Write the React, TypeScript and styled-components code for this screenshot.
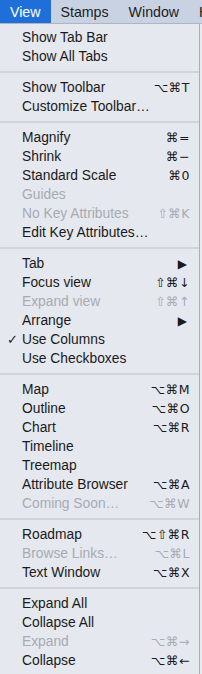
import React from 'react';
import styled, { createGlobalStyle } from 'styled-components';

const GlobalStyle = createGlobalStyle`
  body {
    margin: 0;
    background: #e9ebee;
    font-family: "Liberation Sans", Arial, sans-serif;
  }
`;

const Page = styled.div`
  width: 202px;
  height: 674px;
  overflow: hidden;
`;

const MenuBar = styled.div`
  display: flex;
  height: 23px;
  background: #c9d2e2;
  border-bottom: 1px solid #aeb6c4;
  font-size: 14.2px;
  white-space: nowrap;
`;

const BarItem = styled.div<{ $active?: boolean }>`
  display: flex;
  align-items: center;
  padding: 0 10px;
  color: ${({ $active }) => ($active ? '#ffffff' : '#1c1c1c')};
  background: ${({ $active }) => ($active ? '#1f6fd8' : 'transparent')};
`;

const Menu = styled.div`
  width: 199px;
  padding: 4px 0 4px;
  background: #e5e8ef;
  border-right: 1px solid #a9adb5;
`;

const Row = styled.div<{ $disabled?: boolean }>`
  display: flex;
  align-items: center;
  height: 19px;
  font-size: 13.8px;
  color: ${({ $disabled }) => ($disabled ? '#a7abb2' : '#1a1a1a')};
  white-space: nowrap;
`;

const Check = styled.span`
  width: 22px;
  padding-left: 7px;
  box-sizing: border-box;
  font-family: "DejaVu Sans", sans-serif;
  font-size: 13px;
`;

const Label = styled.span`
  flex: 1;
`;

const Shortcut = styled.span`
  padding-right: 9px;
  font-family: "DejaVu Sans", "Liberation Sans", sans-serif;
  font-size: 12.5px;
  letter-spacing: 0.5px;
`;

const SubArrow = styled.span`
  padding-right: 12px;
  font-size: 12px;
  font-family: "DejaVu Sans", sans-serif;
`;

const Separator = styled.div`
  height: 2px;
  margin: 5px 0;
  background: #cfd3da;
`;

type Item =
  | { sep: true }
  | { label: string; keys?: string; disabled?: boolean; checked?: boolean; sub?: boolean };

const items: Item[] = [
  { label: 'Show Tab Bar' },
  { label: 'Show All Tabs' },
  { sep: true },
  { label: 'Show Toolbar', keys: '⌥⌘T' },
  { label: 'Customize Toolbar…' },
  { sep: true },
  { label: 'Magnify', keys: '⌘=' },
  { label: 'Shrink', keys: '⌘−' },
  { label: 'Standard Scale', keys: '⌘0' },
  { label: 'Guides', disabled: true },
  { label: 'No Key Attributes', keys: '⇧⌘K', disabled: true },
  { label: 'Edit Key Attributes…' },
  { sep: true },
  { label: 'Tab', sub: true },
  { label: 'Focus view', keys: '⇧⌘↓' },
  { label: 'Expand view', keys: '⇧⌘↑', disabled: true },
  { label: 'Arrange', sub: true },
  { label: 'Use Columns', checked: true },
  { label: 'Use Checkboxes' },
  { sep: true },
  { label: 'Map', keys: '⌥⌘M' },
  { label: 'Outline', keys: '⌥⌘O' },
  { label: 'Chart', keys: '⌥⌘R' },
  { label: 'Timeline' },
  { label: 'Treemap' },
  { label: 'Attribute Browser', keys: '⌥⌘A' },
  { label: 'Coming Soon…', keys: '⌥⌘W', disabled: true },
  { sep: true },
  { label: 'Roadmap', keys: '⌥⇧⌘R' },
  { label: 'Browse Links…', keys: '⌥⌘L', disabled: true },
  { label: 'Text Window', keys: '⌥⌘X' },
  { sep: true },
  { label: 'Expand All' },
  { label: 'Collapse All' },
  { label: 'Expand', keys: '⌥⌘→', disabled: true },
  { label: 'Collapse', keys: '⌥⌘←' },
];

const App: React.FC = () => (
  <Page>
    <GlobalStyle />
    <MenuBar>
      <BarItem $active>View</BarItem>
      <BarItem>Stamps</BarItem>
      <BarItem>Window</BarItem>
      <BarItem>H</BarItem>
    </MenuBar>
    <Menu>
      {items.map((item, i) =>
        'sep' in item ? (
          <Separator key={i} />
        ) : (
          <Row key={i} $disabled={item.disabled}>
            <Check>{item.checked ? '✓' : ''}</Check>
            <Label>{item.label}</Label>
            {item.keys && <Shortcut>{item.keys}</Shortcut>}
            {item.sub && <SubArrow>▶</SubArrow>}
          </Row>
        )
      )}
    </Menu>
  </Page>
);

export default App;
